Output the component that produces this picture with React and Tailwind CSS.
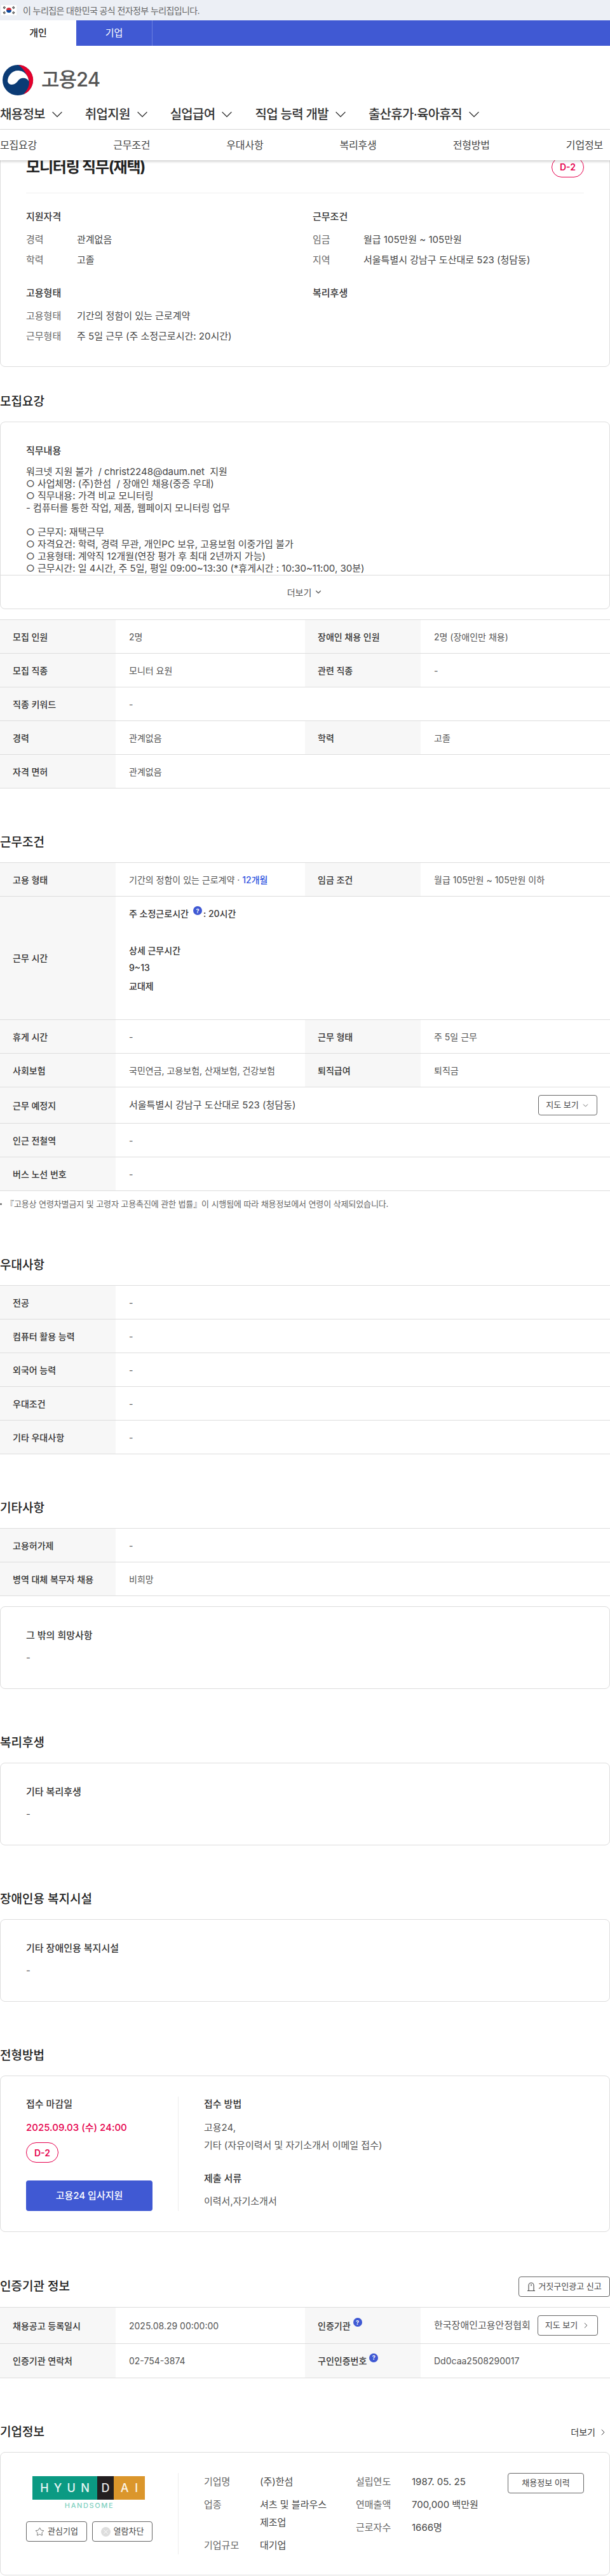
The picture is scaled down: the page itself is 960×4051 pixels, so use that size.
import React from "react";
import { ChevronDown, ChevronRight, Star, X } from "lucide-react";

const FONT = "font-['Inter','Noto_Sans_CJK_KR',sans-serif]";

function Flag() {
  return (
    <svg width="24" height="16" viewBox="0 0 24 16" className="bg-white">
      <path d="M8 8a4 4 0 0 1 8 0z" fill="#cd2e3a" />
      <path d="M8 8a4 4 0 0 0 8 0z" fill="#0047a0" />
      <g stroke="#222" strokeWidth="1.2">
        <path d="M3 5l2-3M4.5 6l2-3M17.5 3l2 3M19 2l2 3M3 11l2 3M4.5 10l2 3M17.5 13l2-3M19 14l2-3" />
      </g>
    </svg>
  );
}

function Emblem() {
  return (
    <svg width="50" height="48" viewBox="0 0 50 48">
      <circle cx="25" cy="24" r="24" fill="#0b3b75" />
      <path d="M26 0A24 24 0 0 1 34 46.3C42 38 45 29 41 20 37 11 32 4 26 0z" fill="#e4002b" />
      <path d="M9 26C9 17 16 9 25 9c5 0 10 2 13 6 3 3 4 7 4 11-1-4-6-6-11-5-6 1-7 10-15 10-4 0-6-2-7-5z" fill="#fff" />
    </svg>
  );
}

function Help({ className = "" }) {
  return (
    <span className={`inline-flex h-[14px] w-[14px] items-center justify-center rounded-full bg-[#4059d3] text-[9px] font-bold leading-none text-white ${className}`}>?</span>
  );
}

function Badge() {
  return (
    <span className="flex h-[32px] w-[51px] items-center justify-center rounded-[16px] border border-[#e6004d] text-[14px] font-semibold text-[#e6004d]">D-2</span>
  );
}

function Heading({ children, right, className = "mt-[69px]" }) {
  return (
    <div className={`mb-4 flex h-[31px] items-center justify-between ${className}`}>
      <h2 className="text-[19px] font-medium leading-[30px] text-[#222]">{children}</h2>
      {right}
    </div>
  );
}

function Row({ cells, h = "h-[53px]" }) {
  return (
    <div className={`flex border-b border-[#ddd] ${h}`}>
      {cells.map((c, i) => (
        <div key={i} className={`flex ${cells.length === 1 ? "w-full" : "w-[480px]"}`}>
          <div className="flex w-[182px] shrink-0 items-center bg-[#f7f7f7] pl-5 text-[14px] font-medium text-[#333]">{c[0]}</div>
          <div className="flex min-w-0 flex-1 items-center justify-between pl-[21px] pr-[20px] text-[14px] text-[#555]">{c[1]}</div>
        </div>
      ))}
    </div>
  );
}

function Table({ rows }) {
  return (
    <div className="border-t border-[#ddd]">
      {rows.map((r, i) => (<Row key={i} cells={r} />))}
    </div>
  );
}

function Card({ children, className = "" }) {
  return <div className={`rounded-[8px] border border-[#ddd] bg-white ${className}`}>{children}</div>;
}

function SimpleCard({ title, className = "" }) {
  return (
    <Card className={`h-[130px] px-[40px] pt-[33px] ${className}`}>
      <h3 className="text-[15px] font-medium leading-[24px] text-[#333]">{title}</h3>
      <p className="mt-[11px] text-[15px] leading-[24px] text-[#555]">-</p>
    </Card>
  );
}

function InfoBlock({ title, items, className = "flex-1" }) {
  return (
    <div className={className}>
      <h3 className="mb-[8px] text-[15px] font-medium leading-[24px] text-[#333]">{title}</h3>
      {items.map(([k, v]) => (
        <div key={k} className="flex h-[32px] items-center text-[15px]">
          <span className="w-[80px] text-[#666]">{k}</span>
          <span className="text-[#444]">{v}</span>
        </div>
      ))}
    </div>
  );
}

function Outline({ children, className = "" }) {
  return (
    <button className={`flex items-center justify-center rounded-[4px] border border-[#666] bg-white text-[13px] text-[#444] ${className}`}>{children}</button>
  );
}

const JOB = [
  "워크넷 지원 불가  / christ2248@daum.net  지원",
  "○ 사업체명: (주)한섬  / 장애인 채용(중증 우대)",
  "○ 직무내용: 가격 비교 모니터링",
  "- 컴퓨터를 통한 작업, 제품, 웹페이지 모니터링 업무",
  "\u00a0",
  "○ 근무지: 재택근무",
  "○ 자격요건: 학력, 경력 무관, 개인PC 보유, 고용보험 이중가입 불가",
  "○ 고용형태: 계약직 12개월(연장 평가 후 최대 2년까지 가능)",
  "○ 근무시간: 일 4시간, 주 5일, 평일 09:00~13:30 (*휴게시간 : 10:30~11:00, 30분)",
];

const NAV = ["채용정보", "취업지원", "실업급여", "직업 능력 개발", "출산휴가·육아휴직"];
const SUB = ["모집요강", "근무조건", "우대사항", "복리후생", "전형방법", "기업정보"];

export default function App() {
  return (
    <div className={`w-[960px] overflow-hidden bg-white pb-[1px] ${FONT}`}>
      <div className="flex h-8 items-center gap-[10px] bg-[#eceff5] pl-[2px] text-[14px] text-[#666]">
        <Flag />
        <span className="tracking-[-0.6px]">이 누리집은 대한민국 공식 전자정부 누리집입니다.</span>
      </div>
      <div className="flex h-10 bg-[#4059d3] text-[15px]">
        <div className="flex w-[120px] items-center justify-center bg-white font-medium text-[#222]">개인</div>
        <div className="flex w-[120px] items-center justify-center border-r border-[#6b80e0] text-white">기업</div>
      </div>
      <div className="flex h-[78px] items-end gap-[12px] pl-[3px]">
        <Emblem />
        <span className="mb-[5px] text-[31px] font-medium leading-[40px] tracking-[-1px] text-[#555]">고용24</span>
      </div>
      <nav className="flex h-[54px] items-center gap-[30px] border-b border-[#ddd] pt-[6px]">
        {NAV.map((n) => (
          <span key={n} className="flex items-center gap-[5px] text-[20px] font-medium tracking-[-0.7px] text-[#333]">
            {n}
            <ChevronDown size={28} strokeWidth={1.1} className="text-[#333]" />
          </span>
        ))}
      </nav>
      <div className="relative z-10 flex h-[48px] items-center justify-between bg-white pr-[11px] text-[16px] tracking-[-0.2px] text-[#444] shadow-[0_2px_4px_rgba(0,0,0,0.2)]">
        {SUB.map((s) => (<span key={s}>{s}</span>))}
      </div>

      <Card className="-mt-[20px] px-[40px] pb-[31px] pt-[14px]">
        <div className="flex h-[31px] items-center justify-between">
          <h1 className="text-[24px] font-bold tracking-[-1.2px] text-[#222]">모니터링 직무(재택)</h1>
          <Badge />
        </div>
        <div className="mt-[25px] border-t border-[#eee]" />
        <div className="mt-[25px] flex">
          <InfoBlock className="w-[451px]" title="지원자격" items={[["경력", "관계없음"], ["학력", "고졸"]]} />
          <InfoBlock title="근무조건" items={[["임금", "월급 105만원 ~ 105만원"], ["지역", "서울특별시 강남구 도산대로 523 (청담동)"]]} />
        </div>
        <div className="mt-[24px] flex">
          <InfoBlock className="w-[451px]" title="고용형태" items={[["고용형태", "기간의 정함이 있는 근로계약"], ["근무형태", "주 5일 근무 (주 소정근로시간: 20시간)"]]} />
          <InfoBlock title="복리후생" items={[]} />
        </div>
      </Card>

      <Heading className="mt-[39px]">모집요강</Heading>
      <Card className="overflow-hidden">
        <div className="h-[240px] overflow-hidden px-[40px] pt-[33px]">
          <h3 className="mb-[11px] text-[15px] font-medium leading-[24px] text-[#333]">직무내용</h3>
          <div className="whitespace-pre text-[15px] leading-[19px] text-[#444]">
            {JOB.map((l, i) => (<div key={i}>{l}</div>))}
          </div>
        </div>
        <div className="flex h-[53px] items-center justify-center gap-[4px] border-t border-[#ddd] text-[14px] text-[#555]">
          더보기 <ChevronDown size={14} strokeWidth={2} />
        </div>
      </Card>

      <div className="mt-[16px]">
        <Table rows={[
          [["모집 인원", "2명"], ["장애인 채용 인원", "2명 (장애인만 채용)"]],
          [["모집 직종", "모니터 요원"], ["관련 직종", "-"]],
          [["직종 키워드", "-"]],
          [["경력", "관계없음"], ["학력", "고졸"]],
          [["자격 면허", "관계없음"]],
        ]} />
      </div>

      <Heading>근무조건</Heading>
      <div className="border-t border-[#ddd]">
        <Row cells={[["고용 형태", <span>기간의 정함이 있는 근로계약 · <span className="font-medium text-[#2f55e0]">12개월</span></span>], ["임금 조건", "월급 105만원 ~ 105만원 이하"]]} />
        <div className="flex h-[194px] border-b border-[#ddd]">
          <div className="flex w-[182px] shrink-0 items-center bg-[#f7f7f7] pl-5 text-[14px] font-medium text-[#333]">근무 시간</div>
          <div className="flex-1 pl-[21px] pt-[14px] text-[14px] text-[#333]">
            <div className="flex h-[24px] items-center font-medium">주 소정근로시간<Help className="ml-[7px] mr-[2px] -mt-[8px]" />: 20시간</div>
            <div className="mt-[34px] flex h-[24px] items-center font-medium">상세 근무시간</div>
            <div className="mt-[3px] flex h-[24px] items-center font-medium">9~13</div>
            <div className="mt-[5px] flex h-[24px] items-center font-medium">교대제</div>
          </div>
        </div>
        <Row cells={[["휴게 시간", "-"], ["근무 형태", "주 5일 근무"]]} />
        <Row cells={[["사회보험", "국민연금, 고용보험, 산재보험, 건강보험"], ["퇴직급여", "퇴직금"]]} />
        <Row h="h-[57px]" cells={[["근무 예정지", <>
          <span className="text-[15px] text-[#444]">서울특별시 강남구 도산대로 523 (청담동)</span>
          <Outline className="h-[32px] w-[93px] gap-[4px]">지도 보기 <ChevronDown size={13} strokeWidth={1.4} /></Outline>
        </>]]} />
        <Row cells={[["인근 전철역", "-"]]} />
        <Row cells={[["버스 노선 번호", "-"]]} />
      </div>
      <p className="mt-[10px] flex items-center gap-[6px] text-[13px] leading-[20px] tracking-[-0.1px] text-[#666]">
        <span className="h-[3px] w-[3px] rounded-full bg-[#666]" />
        『고용상 연령차별금지 및 고령자 고용촉진에 관한 법률』이 시행됨에 따라 채용정보에서 연령이 삭제되었습니다.
      </p>

      <Heading className="mt-[71px]">우대사항</Heading>
      <Table rows={[
        [["전공", "-"]],
        [["컴퓨터 활용 능력", "-"]],
        [["외국어 능력", "-"]],
        [["우대조건", "-"]],
        [["기타 우대사항", "-"]],
      ]} />

      <Heading>기타사항</Heading>
      <Table rows={[
        [["고용허가제", "-"]],
        [["병역 대체 복무자 채용", "비희망"]],
      ]} />
      <SimpleCard title="그 밖의 희망사항" className="mt-[16px]" />

      <Heading>복리후생</Heading>
      <SimpleCard title="기타 복리후생" />

      <Heading>장애인용 복지시설</Heading>
      <SimpleCard title="기타 장애인용 복지시설" />

      <Heading>전형방법</Heading>
      <Card className="flex h-[246px] px-[40px] py-[32px]">
        <div className="flex w-[240px] shrink-0 flex-col border-r border-[#eee] pr-[40px]">
          <h3 className="text-[15px] font-medium leading-[24px] text-[#333]">접수 마감일</h3>
          <p className="mt-[13px] text-[15px] font-medium leading-[24px] text-[#e6004d]">2025.09.03 (수) 24:00</p>
          <div className="mt-[11px]"><Badge /></div>
          <button className="mt-[28px] h-[48px] w-[199px] rounded-[4px] bg-[#4059d3] text-[15px] font-medium text-white">고용24 입사지원</button>
        </div>
        <div className="pl-[40px] text-[15px]">
          <h3 className="font-medium leading-[24px] text-[#333]">접수 방법</h3>
          <p className="mt-[13px] leading-[24px] text-[#555]">고용24,</p>
          <p className="mt-[4px] leading-[24px] text-[#555]">기타 (자유이력서 및 자기소개서 이메일 접수)</p>
          <h3 className="mt-[28px] font-medium leading-[24px] text-[#333]">제출 서류</h3>
          <p className="mt-[12px] leading-[24px] text-[#555]">이력서,자기소개서</p>
        </div>
      </Card>

      <Heading className="mt-[70px] !h-[32px]" right={
        <Outline className="h-[32px] w-[144px] gap-[4px]">
          <svg width="14" height="18" viewBox="0 0 14 18" fill="none" stroke="#444" strokeWidth="1.1"><path d="M3 15V7a4 4 0 0 1 8 0v8M1 15.5h12M7 5v3" /></svg>
          거짓구인광고 신고
        </Outline>
      }>인증기관 정보</Heading>
      <div className="border-t border-[#ddd]">
        <Row h="h-[57px]" cells={[
          ["채용공고 등록일시", "2025.08.29 00:00:00"],
          [<>인증기관<Help className="ml-[4px] -mt-[10px]" /></>, <>
            <span className="whitespace-nowrap text-[15px]">한국장애인고용안정협회</span>
            <Outline className="-mr-[1px] h-[32px] w-[95px] shrink-0 gap-[6px]">지도 보기 <ChevronRight size={14} strokeWidth={1.6} /></Outline>
          </>],
        ]} />
        <Row h="h-[54px]" cells={[
          ["인증기관 연락처", "02-754-3874"],
          [<>구인인증번호<Help className="ml-[4px] -mt-[10px]" /></>, "Dd0caa2508290017"],
        ]} />
      </div>

      <Heading right={
        <span className="flex items-center gap-[4px] pr-[3px] text-[14px] text-[#333]">더보기 <ChevronRight size={16} strokeWidth={1.4} /></span>
      }>기업정보</Heading>
      <Card className="flex h-[194px] px-[40px] py-[32px]">
        <div className="flex w-[240px] shrink-0 flex-col border-r border-[#eee] pr-[40px]">
          <div className="ml-[10px] mt-[5px] flex h-[37px] w-[177px] items-center text-[18px] font-medium text-white/90">
            <div className="flex h-full w-[102px] items-center justify-around bg-[#0b9a83] px-[8px]"><span>H</span><span>Y</span><span>U</span><span>N</span></div>
            <div className="flex h-full w-[26px] items-center justify-center bg-[#231f20]">D</div>
            <div className="flex h-full w-[49px] items-center justify-around bg-[#db962b] px-[6px]"><span>A</span><span>I</span></div>
          </div>
          <p className="mt-[1px] text-center text-[11px] font-medium leading-[16px] tracking-[1.6px] text-[#7fd0bf]">HANDSOME</p>
          <div className="mt-[17px] flex gap-[8px]">
            <Outline className="h-[32px] w-[96px] gap-[5px]"><Star size={15} strokeWidth={1.2} />관심기업</Outline>
            <Outline className="h-[32px] w-[95px] gap-[5px]">
              <span className="flex h-[15px] w-[15px] items-center justify-center rounded-full bg-[#ddd] text-white"><X size={11} strokeWidth={2} /></span>
              열람차단
            </Outline>
          </div>
        </div>
        <div className="flex flex-1 pl-[40px] text-[15px]">
          <div className="w-[239px]">
            <div className="flex h-[28px] items-center"><span className="w-[88px] text-[#666]">기업명</span><span className="text-[#444]">(주)한섬</span></div>
            <div className="mt-[8px] flex"><span className="w-[88px] leading-[28px] text-[#666]">업종</span><span className="w-[120px] break-keep leading-[28px] text-[#444]">셔츠 및 블라우스 제조업</span></div>
            <div className="mt-[8px] flex h-[28px] items-center"><span className="w-[88px] text-[#666]">기업규모</span><span className="text-[#444]">대기업</span></div>
          </div>
          <div className="w-[239px]">
            <div className="flex h-[28px] items-center"><span className="w-[88px] text-[#666]">설립연도</span><span className="text-[#444]">1987. 05. 25</span></div>
            <div className="mt-[8px] flex h-[28px] items-center"><span className="w-[88px] text-[#666]">연매출액</span><span className="text-[#444]">700,000 백만원</span></div>
            <div className="mt-[8px] flex h-[28px] items-center"><span className="w-[88px] text-[#666]">근로자수</span><span className="text-[#444]">1666명</span></div>
          </div>
          <Outline className="h-[32px] w-[120px]">채용정보 이력</Outline>
        </div>
      </Card>
    </div>
  );
}
